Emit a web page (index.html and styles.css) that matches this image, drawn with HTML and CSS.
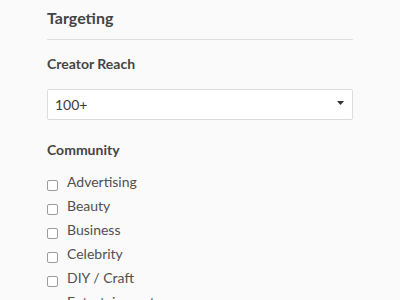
FILE: index.html
```html
<!DOCTYPE html>
<html>
<head>
<meta charset="utf-8">
<link rel="stylesheet" href="styles.css">
</head>
<body>
<div class="panel">
  <h2 class="title">Targeting</h2>
  <h3 class="label label-first">Creator Reach</h3>
  <div class="select">
    <span class="select-value">100+</span>
    <svg class="caret" width="7" height="4" viewBox="0 0 7 4"><path d="M0 0H7L3.5 4Z" fill="#333"/></svg>
  </div>
  <h3 class="label label-community">Community</h3>
  <ul class="checks">
    <li class="check"><span class="box"></span><span class="check-text">Advertising</span></li>
    <li class="check"><span class="box"></span><span class="check-text">Beauty</span></li>
    <li class="check"><span class="box"></span><span class="check-text">Business</span></li>
    <li class="check"><span class="box"></span><span class="check-text">Celebrity</span></li>
    <li class="check"><span class="box"></span><span class="check-text">DIY / Craft</span></li>
    <li class="check"><span class="box"></span><span class="check-text">Entertainment</span></li>
  </ul>
</div>
</body>
</html>
```

FILE: styles.css
```css
html, body {
  margin: 0;
  padding: 0;
  background: #fafafa;
}
body {
  font-family: Lato, "Liberation Sans", sans-serif;
  color: #4a4a4a;
  overflow: hidden;
  height: 300px;
}
.panel {
  width: 306px;
  margin-left: 47px;
}
.title {
  margin: 0;
  padding-top: 8px;
  padding-bottom: 11px;
  font-size: 16px;
  line-height: 20px;
  font-weight: 700;
  color: #454545;
  border-bottom: 1px solid #dedede;
}
.label {
  margin: 0;
  font-size: 14px;
  line-height: 18px;
  font-weight: 700;
  color: #454545;
}
.label-first {
  margin-top: 15px;
}
.select {
  margin-top: 16px;
  height: 29px;
  background: #fff;
  border: 1px solid #dcdcdc;
  border-radius: 2px;
  display: flex;
  align-items: center;
  padding: 0 8px 0 7px;
}
.select-value {
  font-size: 14px;
  line-height: 17px;
  color: #3c3c3c;
  flex: 1;
}
.caret {
  display: block;
  margin-bottom: 4px;
}
.label-community {
  margin-top: 21px;
}
.checks {
  list-style: none;
  margin: 11px 0 0;
  padding: 0;
}
.check {
  display: flex;
  align-items: flex-start;
  height: 24px;
}
.box {
  box-sizing: border-box;
  width: 11px;
  height: 11px;
  margin-top: 10px;
  border: 1px solid #9c9c9c;
  border-radius: 2px;
  background: #fff;
  flex: none;
}
.check-text {
  margin-left: 9px;
  font-size: 14px;
  line-height: 24px;
  color: #505050;
}
```
